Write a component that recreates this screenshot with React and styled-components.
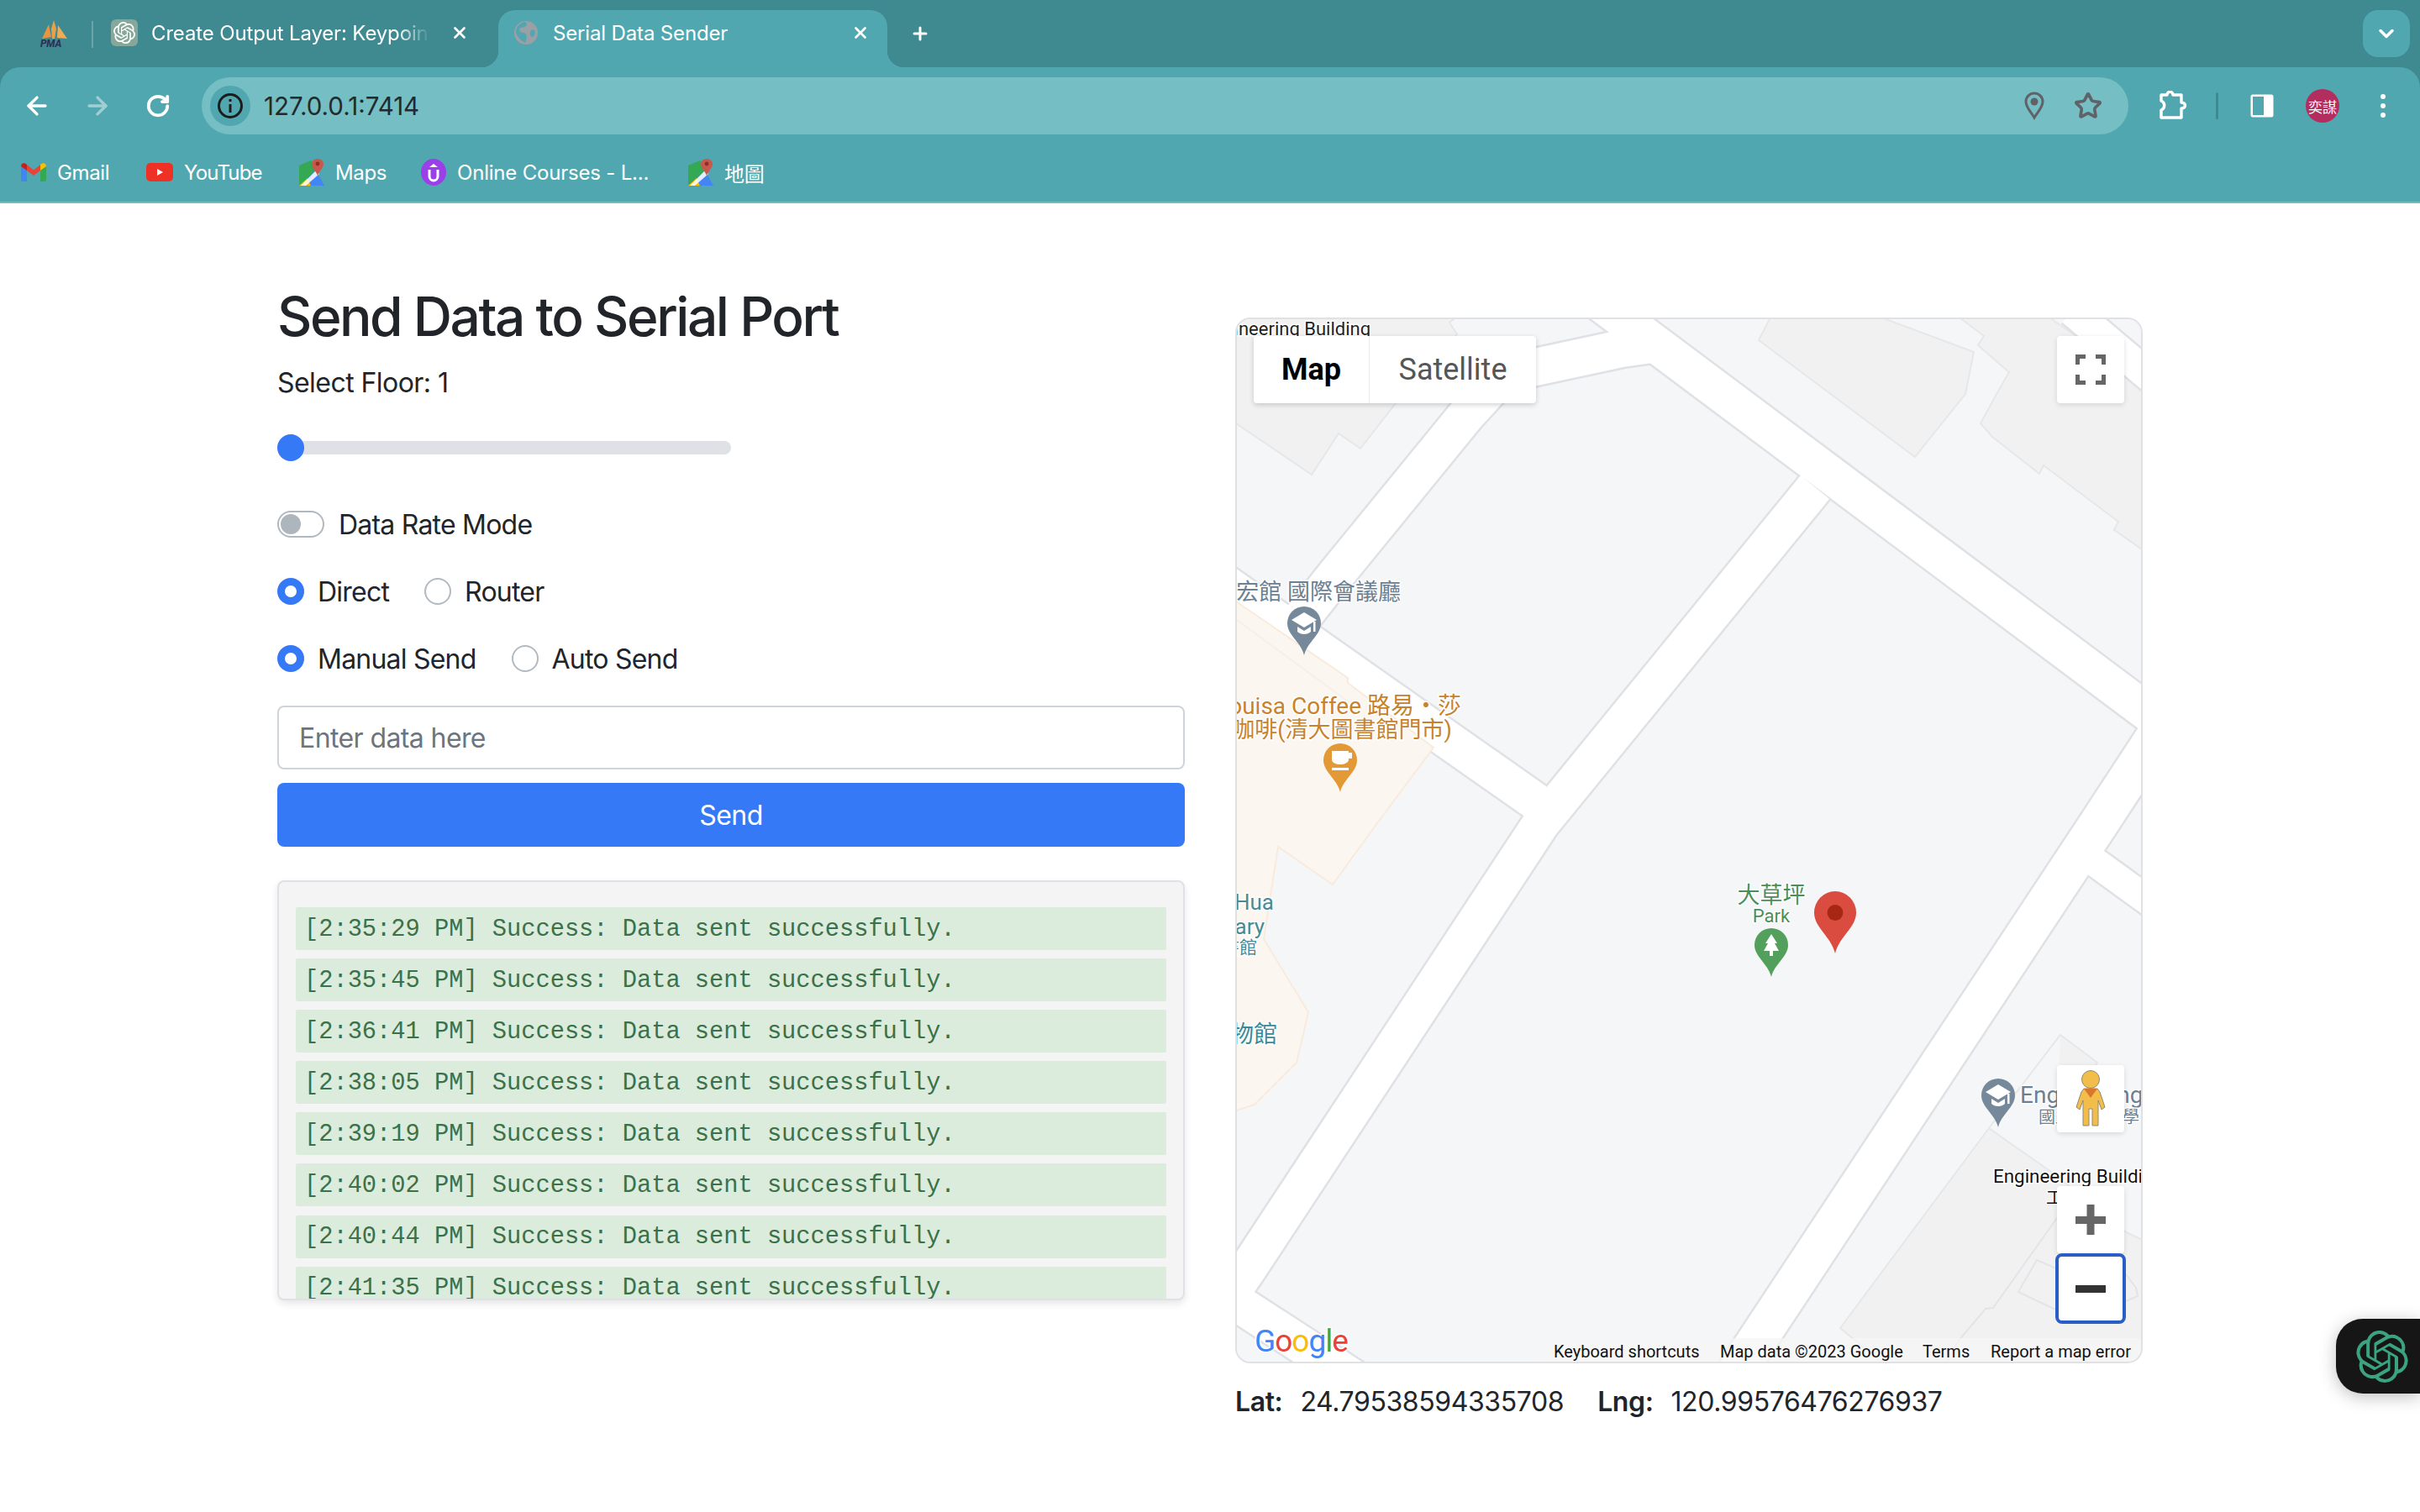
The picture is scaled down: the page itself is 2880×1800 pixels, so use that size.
import React from 'react';
import styled, {createGlobalStyle} from 'styled-components';
import {ArrowLeft, ArrowRight, RotateCw, Star, X, Plus, ChevronDown} from 'lucide-react';
import {SiOpenai} from 'react-icons/si';

const GlobalStyle = createGlobalStyle`
  html, body { margin: 0; padding: 0; background: #fff; overflow: hidden; }
  body { font-family: Inter, "Noto Sans CJK TC", sans-serif; color: #212529; }
  * { box-sizing: border-box; }
`

const TAB_BG = '#3f8990';
const BAR_BG = '#51a7af';

const Screen = styled.div`
  position: relative;
  width: 2880px;
  height: 1800px;
  overflow: hidden;
`

/* browser chrome */
const Chrome = styled.header`
  background: ${TAB_BG};
  color: #fff;
`
const TabStrip = styled.div`
  height: 80px;
  display: flex;
  align-items: flex-end;
  padding-left: 48px;
  font-size: 24px;
  letter-spacing: -0.15px;
`
const PinnedFav = styled.div`
  width: 33px;
  height: 32px;
  margin: 0 28px 24px 0;
  svg { display: block; }
`
const TabSep = styled.div`
  width: 2px;
  height: 32px;
  margin-bottom: 23px;
  background: #6aa5aa;
`
const Tab = styled.div`
  position: relative;
  height: 68px;
  width: ${p => p.$active ? 463 : 482}px;
  padding: 0 ${p => p.$active ? 20 : 34}px 14px ${p => p.$active ? 17 : 21}px;
  display: flex;
  align-items: center;
  gap: 16px;
  border-radius: 20px 20px 0 0;
  background: ${p => p.$active ? BAR_BG : 'transparent'};
  ${p => p.$active && `
    &::before, &::after {
      content: '';
      position: absolute;
      bottom: 0;
      width: 20px;
      height: 20px;
    }
    &::before { left: -20px; background: radial-gradient(circle at 0 0, transparent 20px, ${BAR_BG} 20.5px); }
    &::after { right: -20px; background: radial-gradient(circle at 100% 0, transparent 20px, ${BAR_BG} 20.5px); }
  `}
`
const TabTitle = styled.span`
  flex: 1;
  white-space: nowrap;
  overflow: hidden;
  ${p => p.$fade && `
    -webkit-mask-image: linear-gradient(90deg, #000 86%, transparent 98%);
    mask-image: linear-gradient(90deg, #000 86%, transparent 98%);
  `}
`
const TabClose = styled.span`
  width: 24px;
  height: 24px;
  display: flex;
  align-items: center;
  justify-content: center;
`
const FavBox = styled.span`
  width: 32px;
  height: 32px;
  flex: none;
  display: flex;
  align-items: center;
  justify-content: center;
  border-radius: 6px;
  background: ${p => p.$bg || 'transparent'};
`
const NewTab = styled.span`
  display: flex;
  width: 24px;
  height: 24px;
  margin: 0 0 28px 27px;
`
const TabMenu = styled.div`
  width: 56px;
  height: 56px;
  margin: 0 12px 12px auto;
  border-radius: 18px;
  background: ${BAR_BG};
  display: flex;
  align-items: center;
  justify-content: center;
`
const ToolArea = styled.div`
  background: ${BAR_BG};
  border-radius: 24px 24px 0 0;
  border-bottom: 2px solid #70bcc1;
  height: 162px;
`
const Toolbar = styled.div`
  height: 92px;
  padding: 12px 20px 12px 20px;
  display: flex;
  align-items: center;
  gap: 28px;
`
const NavGroup = styled.div`
  display: flex;
  gap: 24px;
`
const IconSlot = styled.span`
  width: 48px;
  height: 48px;
  flex: none;
  display: flex;
  align-items: center;
  justify-content: center;
  opacity: ${p => p.$dim ? 0.45 : 1};
`
const Omnibox = styled.div`
  flex: 1;
  height: 68px;
  border-radius: 34px;
  background: #74bec4;
  padding: 0 24px 0 10px;
  display: flex;
  align-items: center;
  gap: 16px;
  color: #1f2b2d;
  font-size: 29.5px;
`
const InfoChip = styled.span`
  width: 48px;
  height: 48px;
  border-radius: 50%;
  background: ${BAR_BG};
  display: flex;
  align-items: center;
  justify-content: center;
`
const Url = styled.span`
  flex: 1;
`
const BarSep = styled.span`
  width: 3px;
  height: 32px;
  border-radius: 2px;
  background: #3f8990;
`
const Avatar = styled.span`
  width: 40px;
  height: 40px;
  border-radius: 50%;
  background: #b32d5e;
  color: #fff;
  font: 17px "Noto Sans CJK TC", sans-serif;
  display: flex;
  align-items: center;
  justify-content: center;
  white-space: nowrap;
`
const Bookmarks = styled.nav`
  height: 68px;
  padding: 0 0 2px 25px;
  display: flex;
  align-items: center;
  font-size: 24px;
  letter-spacing: -0.35px;
`
const Bookmark = styled.span`
  display: flex;
  align-items: center;
  gap: 13px;
  width: ${p => p.$w}px;
  letter-spacing: ${p => p.$ls || -0.35}px;
  white-space: nowrap;
  svg { display: block; flex: none; }
`

/* page */
const Main = styled.main`
  display: flex;
  gap: 60px;
  padding: 96px 0 0 330px;
`
const LeftColumn = styled.section`
  width: 1080px;
`
const RightColumn = styled.section`
  width: 1080px;
  margin-top: 40px;
`
const Title = styled.h1`
  margin: 0 0 16px;
  font-size: 64px;
  line-height: 78px;
  font-weight: 500;
  letter-spacing: -2.45px;
`
const FloorLabel = styled.div`
  font-size: 32px;
  line-height: 48px;
  letter-spacing: -0.55px;
`
const RangeInput = styled.input`
  display: block;
  appearance: none;
  width: 540px;
  height: 32px;
  margin: 37px 0 0;
  background: transparent;
  &::-webkit-slider-runnable-track {
    height: 16px;
    border-radius: 8px;
    background: #dee2e6;
  }
  &::-webkit-slider-thumb {
    appearance: none;
    width: 32px;
    height: 32px;
    margin-top: -8px;
    border-radius: 50%;
    background: #3579f6;
  }
`
const Row = styled.div`
  display: flex;
  align-items: center;
  height: 32px;
  margin-top: ${p => p.$mt}px;
  font-size: 32px;
  letter-spacing: -0.78px;
`
const Switch = styled.span`
  display: block;
  width: 56px;
  height: 32px;
  margin-right: 17px;
  border: 2px solid #b2b8bf;
  border-radius: 16px;
  padding: 2px;
  &::before {
    content: '';
    display: block;
    width: 24px;
    height: 24px;
    border-radius: 50%;
    background: #adb5bd;
  }
`
const RadioLabel = styled.label`
  display: flex;
  align-items: center;
  margin-right: 42px;
`
const Radio = styled.input`
  appearance: none;
  width: 32px;
  height: 32px;
  margin: 0 16px 0 0;
  border-radius: 50%;
  border: 2px solid #b4bac1;
  background: #fff;
  &:checked {
    border: 9px solid #3579f6;
  }
`
const TextInput = styled.input`
  display: block;
  width: 100%;
  height: 76px;
  margin-top: 40px;
  padding: 0 24px;
  border: 2px solid #ced4da;
  border-radius: 8px;
  font: 32px Inter, sans-serif;
  letter-spacing: -0.6px;
  &::placeholder { color: #6c757d; }
`
const SendButton = styled.button`
  display: block;
  width: 100%;
  height: 76px;
  margin-top: 16px;
  border: 0;
  border-radius: 8px;
  background: #3579f6;
  color: #fff;
  font: 32px Inter, sans-serif;
  letter-spacing: -0.6px;
`
const LogBox = styled.div`
  height: 500px;
  margin-top: 40px;
  padding: 30px 20px 0;
  overflow: hidden;
  border: 2px solid #dee2e6;
  border-radius: 8px;
  background: #f4f4f4;
  box-shadow: 0 4px 10px rgba(0,0,0,.1);
`
const LogRow = styled.div`
  height: 51px;
  margin-bottom: 10.1px;
  padding: 3px 0 0 10px;
  display: flex;
  align-items: center;
  background: #dbebdc;
  border-radius: 2px;
  color: #3b7148;
  font: 28.7px/1 "Liberation Mono", monospace;
  white-space: nowrap;
`
const MapPanel = styled.div`
  position: relative;
  height: 1245px;
  border: 2px solid #dfe1e5;
  border-radius: 18px;
  overflow: hidden;
  background: #f5f6f8;
  svg.base { display: block; }
`
const MapToggle = styled.div`
  position: absolute;
  top: 20px;
  left: 20px;
  height: 80px;
  display: flex;
  background: #fff;
  border-radius: 4px;
  box-shadow: 0 2px 6px rgba(0,0,0,.18);
  font: 36px Roboto, sans-serif;
`
const MapType = styled.span`
  width: ${p => p.$w}px;
  display: flex;
  align-items: center;
  justify-content: center;
  color: ${p => p.$on ? '#000' : '#565656'};
  font-weight: ${p => p.$on ? 700 : 400};
  border-right: ${p => p.$on ? '1px solid #ebebeb' : 0};
`
const MapControl = styled.div`
  position: absolute;
  right: 20px;
  top: ${p => p.$top}px;
  width: 80px;
  height: ${p => p.$h || 80}px;
  background: #fff;
  border-radius: 4px;
  box-shadow: 0 2px 6px rgba(0,0,0,.12);
  display: flex;
  align-items: center;
  justify-content: center;
`
const ZoomOut = styled(MapControl)`
  right: 18px;
  width: 84px;
  height: 84px;
  border: 4px solid #2a5ec7;
  border-radius: 8px;
  box-shadow: none;
`
const Attribution = styled.div`
  position: absolute;
  right: 0;
  bottom: 0;
  width: 714px;
  height: 28px;
  background: rgba(245,245,245,.75);
  color: #111;
  font: 20px/28px Roboto, sans-serif;
`
const AttrText = styled.span`
  position: absolute;
  left: ${p => p.$x}px;
  top: 2px;
  white-space: nowrap;
`
const Coords = styled.div`
  display: flex;
  height: 48px;
  align-items: center;
  margin-top: 21px;
  font-size: 32px;
  letter-spacing: -0.4px;
`
const CoordName = styled.b`
  font-weight: 600;
  margin-right: 21px;
`
const CoordValue = styled.span`
  margin-right: 40px;
`
const AssistantTab = styled.div`
  position: absolute;
  right: 0;
  top: 1570px;
  width: 100px;
  height: 89px;
  padding-left: 24px;
  display: flex;
  align-items: center;
  background: #161616;
  border-radius: 32px 0 0 32px;
  box-shadow: 0 4px 20px rgba(0,0,0,.25);
  color: #3aa37f;
`

/* small drawings */
const PmaIcon = () => (
  <svg width="33" height="32" viewBox="0 0 33 32">
    <path d="M16 0 L19 10 L17 22 L14 22 L13 10Z" fill="#e9a04b"/>
    <path d="M10 5 L13 20 L2 22Z" fill="#e8953f"/>
    <path d="M21 6 L32 22 L20 21Z" fill="#f0ab55"/>
    <text x="0" y="32" fontFamily="Roboto" fontStyle="italic" fontWeight="700" fontSize="12" fill="#2c2c5a">PMA</text>
  </svg>
);
const GlobeIcon = () => (
  <svg width="30" height="30" viewBox="0 0 30 30">
    <circle cx="15" cy="15" r="14" fill="#9aa0a6"/>
    <path d="M14 2 C19 6 13 9 9 9 C5 10 8 15 12 15 C16 15 17 20 14 27 C9 24 4 20 3 14 C3 8 8 3 14 2Z" fill="#51a7af"/>
    <path d="M22 11 C26 11 27 15 24 19 C21 22 19 17 20 14Z" fill="#51a7af"/>
  </svg>
);
const InfoIcon = () => (
  <svg width="34" height="34" viewBox="0 0 34 34" fill="none" stroke="#1c1c1c">
    <circle cx="17" cy="17" r="13.5" strokeWidth="3"/>
    <path d="M17 15 V25 M17 9 V12" strokeWidth="3"/>
  </svg>
);
const LocationIcon = () => (
  <svg width="26" height="34" viewBox="0 0 26 34" fill="none">
    <path d="M13 31 C9 24 3 19 3 12 A10 10 0 0 1 23 12 C23 19 17 24 13 31Z" stroke="#5f6368" strokeWidth="3"/>
    <circle cx="13" cy="12" r="4.5" fill="#5f6368"/>
  </svg>
);
const PuzzleIcon = () => (
  <svg width="36" height="36" viewBox="0 0 36 36" fill="none">
    <path d="M5 5 H12 C12 0 19 0 19 5 H29 V14 C35 14 35 21 29 21 V32 H5 V23 C10 21 10 14 5 12Z" stroke="#fff" strokeWidth="3.4" strokeLinejoin="round"/>
  </svg>
);
const SidebarIcon = () => (
  <svg width="30" height="30" viewBox="0 0 30 30">
    <rect x="1.5" y="1.5" width="27" height="27" rx="2.5" fill="#fff"/>
    <rect x="4" y="4" width="13" height="22" fill="#51a7af"/>
  </svg>
);
const DotsIcon = () => (
  <svg width="8" height="32" viewBox="0 0 8 32" fill="#fff">
    <circle cx="4" cy="5" r="3"/><circle cx="4" cy="16" r="3"/><circle cx="4" cy="27" r="3"/>
  </svg>
);
const GmailIcon = () => (
  <svg width="30" height="22" viewBox="0 0 30 22">
    <path d="M0 4 V20 a2 2 0 0 0 2 2 H7 V9Z" fill="#4285f4"/>
    <path d="M30 4 V20 a2 2 0 0 1 -2 2 H23 V9Z" fill="#34a853"/>
    <path d="M7 9 V2 L15 8.5 L23 2 V9 L15 15Z" fill="#ea4335"/>
    <path d="M0 4 C0 0 4 -1 7 2 V9Z" fill="#c5221f"/>
    <path d="M30 4 C30 0 26 -1 23 2 V9Z" fill="#fbbc04"/>
  </svg>
);
const YoutubeIcon = () => (
  <svg width="32" height="22" viewBox="0 0 32 22">
    <rect width="32" height="22" rx="5" fill="#ee3124"/>
    <path d="M13 7 L20 11 L13 15Z" fill="#fff"/>
  </svg>
);
const MapsIcon = () => (
  <svg width="30" height="32" viewBox="0 0 30 32">
    <path d="M0 8 L14 2 L22 14 L0 32Z" fill="#34a853"/>
    <path d="M0 32 L10 23 L14 32Z" fill="#fbbc04"/>
    <path d="M10 23 L20 14 L30 32 H14Z" fill="#4285f4"/>
    <path d="M2 32 L20 14 L24 18 L8 32Z" fill="#fff" opacity=".85"/>
    <path d="M22 20 C19 13 15 11 15 6 A7 6 0 0 1 29 6 C29 11 25 13 22 20Z" fill="#c9584c"/>
    <circle cx="22" cy="6" r="2.4" fill="#8c2f26"/>
  </svg>
);
const UdemyIcon = () => (
  <svg width="30" height="32" viewBox="0 0 30 32" fill="none">
    <ellipse cx="15" cy="16" rx="15" ry="16" fill="#9b3fe8"/>
    <path d="M10 13 V21 a5 5 0 0 0 10 0 V13" stroke="#fff" strokeWidth="3"/>
    <path d="M10 10 L15 6 L20 10Z" fill="#fff"/>
  </svg>
);

const FullscreenIcon = () => (
  <svg width="36" height="36" viewBox="0 0 36 36" fill="none" stroke="#666" strokeWidth="5">
    <path d="M2.5 12 V2.5 H12 M24 2.5 H33.5 V12 M33.5 24 V33.5 H24 M12 33.5 H2.5 V24"/>
  </svg>
);
const PegmanIcon = () => (
  <svg width="36" height="68" viewBox="0 0 36 68">
    <g stroke="#8f8a72" strokeWidth="1">
      <path d="M10 22 H26 L29 26 L35 44 L31 47 L27 36 V66 H20 V46 H16 V66 H9 V36 L5 47 L1 44 L7 26Z" fill="#f3bd4b"/>
      <circle cx="18" cy="11" r="10.5" fill="#f3bd4b"/>
    </g>
    <path d="M10 22 H26 L18 33Z" fill="#d9782d"/>
  </svg>
);
const ZoomIcon = ({minus}) => (
  <svg width="36" height="36" viewBox="0 0 36 36" fill={minus ? '#333' : '#666'}>
    <rect x="0" y="14" width="36" height="9"/>
    {!minus && <rect x="13.5" y="0" width="9" height="40"/>}
  </svg>
);

const mapRoads = [
  {d: 'M1880 342 L2560 851', w: 44},
  {d: 'M2160 580 L1834 980 L1482 1515 L1440 1575', w: 44},
  {d: 'M1440 682 L1850 970', w: 44},
  {d: 'M1530 760 L1590 684 L1745 494 L1790 445 L1930 415 L1965 410', w: 44},
  {d: 'M2060 1645 L2075 1620 L2498 980 L2570 870', w: 46},
  {d: 'M2490 1024 L2570 1082', w: 34},
  {d: 'M2466 370 L2570 458', w: 36},
  {d: 'M1440 1530 L1640 1660', w: 44},
];

const Pin = ({x, y, w, h, color, children}) => (
  <g transform={`translate(${x} ${y}) scale(${w / 40} ${h / 58})`}>
    <path d="M0 58 C-4 42 -20 34 -20 20 A20 20 0 1 1 20 20 C20 34 4 42 0 58Z" fill={color}/>
    {children}
  </g>
);
const CapGlyph = () => (
  <g fill="#fff">
    <path d="M0 7 L15 16 L0 25 L-15 16Z"/>
    <path d="M-8 24 L0 29 L8 24 V30 C4 34 -4 34 -8 30Z"/>
    <rect x="11" y="18" width="2.5" height="12"/>
  </g>
);

const MapLabel = styled.text`
  font-family: Roboto, "Noto Sans CJK TC", sans-serif;
  paint-order: stroke;
  stroke: #fff;
  stroke-width: 3px;
  stroke-linejoin: round;
`

const MapDrawing = () => (
  <svg className="base" width="1076" height="1241" viewBox="1472 380 1076 1241">
    <rect x="1472" y="380" width="1076" height="1241" fill="#f5f6f8"/>
    <g fill="#f1f1f2" stroke="#e6e7e9" strokeWidth="2">
      <path d="M2107 378 L2093 405 L2279 544 L2339 469 L2349 419 L2239 378Z"/>
      <path d="M2332 378 L2361 400 L2354 411 L2391 443 L2375 471 L2357 504 L2371 520 L2427 564 L2432 554 L2521 621 L2516 631 L2552 656 L2552 457 L2439 378Z"/>
      <path d="M1468 378 L1732 378 L1725 384 L1734 398 L1661 480 L1619 534 L1593 516 L1561 565 L1468 502Z"/>
      <path d="M2452 1232 L2367 1343 L2190 1581 L2243 1625 L2552 1625 L2552 1477 L2530 1467 L2448 1400 L2367 1343 L2452 1232 L2496 1265 L2448 1330"/>
    </g>
    <g fill="none" stroke="#e3e4e7" strokeWidth="2">
      <path d="M2424 1500 L2402 1538 L2444 1558 L2480 1570 L2544 1543 L2542 1533 L2530 1517 L2470 1520Z"/>
      <path d="M2448 1450 L2372 1557 L2363 1558 L2330 1597 L2315 1625"/>
    </g>
    <g fill="none" stroke="#dfe1e5" strokeLinejoin="miter">
      {mapRoads.map(r => <path key={r.d} d={r.d} strokeWidth={r.w + 5}/>)}
    </g>
    <g fill="none" stroke="#fff" strokeLinejoin="miter">
      {mapRoads.map(r => <path key={r.d} d={r.d} strokeWidth={r.w}/>)}
    </g>
    <path d="M1468 714 L1604 807 L1604 813 L1706 890 L1639 980 L1586 1053 L1521 1008 L1504 1118 L1557 1205 L1543 1265 L1493 1315 L1468 1323Z" fill="#fcf6f1" stroke="#f9ebdc" strokeWidth="2"/>
    <path d="M1468 735 L1604 835" fill="none" stroke="#f7efe8" strokeWidth="2"/>

    <MapLabel x="1631" y="399" textAnchor="end" fontSize="22" fill="#222">Engineering Building</MapLabel>
    <MapLabel x="1667" y="714" textAnchor="end" fontSize="27" fill="#6d8092">宏館 國際會議廳</MapLabel>
    <Pin x={1552} y={722} w={40} h={58} color="#75899a"><CapGlyph/></Pin>
    <MapLabel x="1739" y="850" textAnchor="end" fontSize="28" fill="#c9822c">Louisa Coffee 路易・莎</MapLabel>
    <MapLabel x="1728" y="878" textAnchor="end" fontSize="27" fill="#c9822c">咖啡(清大圖書館門市)</MapLabel>
    <Pin x={1595} y={885} w={40} h={58} color="#e39a36">
      <path d="M-10 9 H10 V19 C10 27 -10 27 -10 19Z M10 11 H14 V18 H10Z" fill="#fff"/>
      <rect x="-10" y="29" width="20" height="3" fill="#fff"/>
    </Pin>
    <MapLabel x="1516" y="1083" textAnchor="end" fontSize="26" fill="#4b8a95">Tsing Hua</MapLabel>
    <MapLabel x="1505" y="1112" textAnchor="end" fontSize="26" fill="#4b8a95">Library</MapLabel>
    <MapLabel x="1496" y="1135" textAnchor="end" fontSize="21" fill="#4b8a95">圖書館</MapLabel>
    <MapLabel x="1520" y="1241" textAnchor="end" fontSize="28" fill="#3a8a97">文物館</MapLabel>
    <MapLabel x="2108" y="1075" textAnchor="middle" fontSize="27" fill="#4a8f57">大草坪</MapLabel>
    <MapLabel x="2108" y="1098" textAnchor="middle" fontSize="22" fill="#4a8f57">Park</MapLabel>
    <Pin x={2108} y={1105} w={40} h={58} color="#53a05c">
      <path d="M0 7 L7 18 H4 L9 27 H2 V33 H-2 V27 H-9 L-4 18 H-7Z" fill="#fff"/>
    </Pin>
    <Pin x={2184} y={1061} w={50} h={74} color="#d94c3f">
      <circle cx="0" cy="20" r="7.5" fill="#a52714"/>
    </Pin>
    <Pin x={2378} y={1284} w={40} h={58} color="#75899a"><CapGlyph/></Pin>
    <MapLabel x="2404" y="1313" fontSize="28" fill="#6a8193">Engineering</MapLabel>
    <MapLabel x="2426" y="1337" fontSize="20" fill="#6a8193">國立清華大學</MapLabel>
    <MapLabel x="2372" y="1408" fontSize="22.4" fill="#111">Engineering Building</MapLabel>
    <MapLabel x="2435" y="1433" fontSize="20" fill="#111">工程一館</MapLabel>
    <MapLabel x="1493" y="1609" fontSize="37" fontFamily="Lato" letterSpacing="-1">
      <tspan fill="#4285f4">G</tspan><tspan fill="#ea4335">o</tspan><tspan fill="#fbbc04">o</tspan><tspan fill="#4285f4">g</tspan><tspan fill="#34a853">l</tspan><tspan fill="#ea4335">e</tspan>
    </MapLabel>
  </svg>
);

const logTimes = ['2:35:29', '2:35:45', '2:36:41', '2:38:05', '2:39:19', '2:40:02', '2:40:44', '2:41:35'];

const App = () => {
  return (
    <Screen>
      <GlobalStyle/>
      <Chrome>
        <TabStrip>
          <PinnedFav><PmaIcon/></PinnedFav>
          <TabSep/>
          <Tab>
            <FavBox $bg="#85a89a"><SiOpenai size={26} color="#fff"/></FavBox>
            <TabTitle $fade>Create Output Layer: Keypoint</TabTitle>
            <TabClose><X size={22} strokeWidth={3}/></TabClose>
          </Tab>
          <Tab $active>
            <FavBox><GlobeIcon/></FavBox>
            <TabTitle>Serial Data Sender</TabTitle>
            <TabClose><X size={22} strokeWidth={3}/></TabClose>
          </Tab>
          <NewTab><Plus size={24} strokeWidth={3}/></NewTab>
          <TabMenu><ChevronDown size={28} strokeWidth={3}/></TabMenu>
        </TabStrip>
        <ToolArea>
          <Toolbar>
            <NavGroup>
              <IconSlot><ArrowLeft size={34} strokeWidth={2.4}/></IconSlot>
              <IconSlot $dim><ArrowRight size={34} strokeWidth={2.4}/></IconSlot>
              <IconSlot><RotateCw size={30} strokeWidth={3}/></IconSlot>
            </NavGroup>
            <Omnibox>
              <InfoChip><InfoIcon/></InfoChip>
              <Url>127.0.0.1:7414</Url>
              <IconSlot><LocationIcon/></IconSlot>
              <IconSlot><Star size={34} strokeWidth={2.6} color="#5f6368"/></IconSlot>
            </Omnibox>
            <IconSlot><PuzzleIcon/></IconSlot>
            <BarSep/>
            <IconSlot><SidebarIcon/></IconSlot>
            <Avatar>奕謀</Avatar>
            <IconSlot><DotsIcon/></IconSlot>
          </Toolbar>
          <Bookmarks>
            <Bookmark $w={149}><GmailIcon/>Gmail</Bookmark>
            <Bookmark $w={182} $ls={-0.8}><YoutubeIcon/>YouTube</Bookmark>
            <Bookmark $w={145}><MapsIcon/>Maps</Bookmark>
            <Bookmark $w={318} $ls={-0.2}><UdemyIcon/>Online Courses - L...</Bookmark>
            <Bookmark><MapsIcon/>地圖</Bookmark>
          </Bookmarks>
        </ToolArea>
      </Chrome>

      <Main>
        <LeftColumn>
          <Title>Send Data to Serial Port</Title>
          <FloorLabel>Select Floor: 1</FloorLabel>
          <RangeInput type="range" min="1" max="10" defaultValue="1"/>
          <Row $mt={59}><Switch/>Data Rate Mode</Row>
          <Row $mt={48}>
            <RadioLabel><Radio type="radio" name="mode" defaultChecked/>Direct</RadioLabel>
            <RadioLabel><Radio type="radio" name="mode"/>Router</RadioLabel>
          </Row>
          <Row $mt={48}>
            <RadioLabel><Radio type="radio" name="send" defaultChecked/>Manual Send</RadioLabel>
            <RadioLabel><Radio type="radio" name="send"/>Auto Send</RadioLabel>
          </Row>
          <TextInput placeholder="Enter data here"/>
          <SendButton>Send</SendButton>
          <LogBox>
            {logTimes.map(t => <LogRow key={t}>[{t} PM] Success: Data sent successfully.</LogRow>)}
          </LogBox>
        </LeftColumn>
        <RightColumn>
          <MapPanel>
            <MapDrawing/>
            <MapToggle>
              <MapType $on $w={138}>Map</MapType>
              <MapType $w={198}>Satellite</MapType>
            </MapToggle>
            <MapControl $top={20}><FullscreenIcon/></MapControl>
            <MapControl $top={888}><PegmanIcon/></MapControl>
            <MapControl $top={1032}><ZoomIcon/></MapControl>
            <ZoomOut $top={1112}><ZoomIcon minus/></ZoomOut>
            <Attribution>
              <AttrText $x={15}>Keyboard shortcuts</AttrText>
              <AttrText $x={213}>Map data ©2023 Google</AttrText>
              <AttrText $x={454}>Terms</AttrText>
              <AttrText $x={535}>Report a map error</AttrText>
            </Attribution>
          </MapPanel>
          <Coords>
            <CoordName>Lat:</CoordName>
            <CoordValue>24.79538594335708</CoordValue>
            <CoordName>Lng:</CoordName>
            <span>120.99576476276937</span>
          </Coords>
        </RightColumn>
      </Main>

      <AssistantTab><SiOpenai size={62}/></AssistantTab>
    </Screen>
  );
}

export default App;
